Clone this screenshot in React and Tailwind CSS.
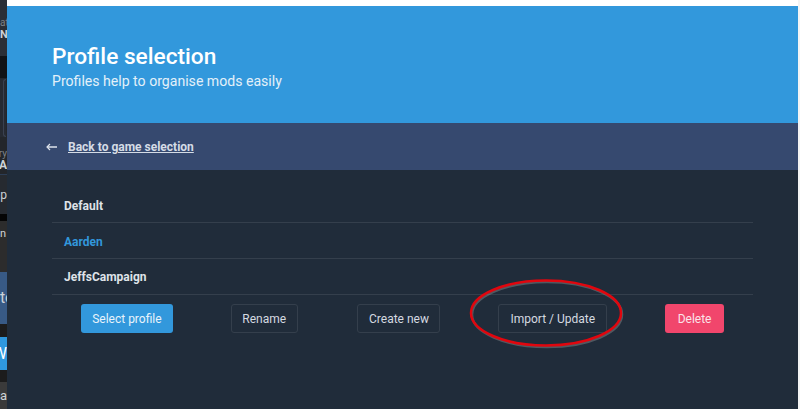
import React from 'react';

const font = { fontFamily: 'Roboto, "Noto Sans", sans-serif' };

// sliver of the window behind, only a few px of it show
const Sliver = () => {
  return (
    <div className="w-[7px] shrink-0 h-full flex flex-col overflow-hidden bg-[#23262b] text-[11px] leading-none whitespace-nowrap text-[#ccd2d8]">
      <div className="h-[56px] shrink-0 flex flex-col justify-end items-start pb-[15px] bg-[#2b2f36]">
        <span className="text-[#7d8288] text-[10px] leading-[11px]">at</span>
        <span className="font-bold leading-[13px]">N</span>
      </div>
      <div className="h-[22px] shrink-0 bg-[#111316]"></div>
      <div className="h-[60px] shrink-0 bg-[#262a32] border-r border-t border-b border-[#23262b]">
        <div className="h-full ml-[3px] rounded-l-[3px] border-l border-t border-b border-[#3a4150]"></div>
      </div>
      <div className="h-[37px] shrink-0 flex flex-col justify-end items-end pb-[2px] border-b border-[#2c3d55] bg-[#23262b]">
        <span className="text-[#7d8288] text-[10px] leading-[11px]">ry</span>
        <span className="font-bold text-[12px] leading-[13px]">A</span>
      </div>
      <div className="h-[39px] shrink-0 flex items-center justify-end text-[12px] bg-[#262a30]">ap</div>
      <div className="h-[7px] shrink-0 bg-[#050505]"></div>
      <div className="h-[51px] shrink-0 flex items-start justify-start pt-[7px] bg-[#2c2c2c]">n</div>
      <div className="h-[52px] shrink-0 flex items-center justify-start text-[16px] bg-[#385a85]">to</div>
      <div className="h-[13px] shrink-0 bg-[#1c1c1c]"></div>
      <div className="h-[33px] shrink-0 flex items-center justify-end text-[16px] text-white bg-[#2f98de]">W</div>
      <div className="h-[12px] shrink-0 bg-[#1c1c1c]"></div>
      <div className="flex-1 flex items-center justify-end text-[13px] bg-[#3a3a3a]">Pa</div>
    </div>
  );
};

const Btn = ({ children, className }) => {
  return (
    <button className={`h-[29px] rounded-[3px] text-[12px] ${className}`}>{children}</button>
  );
};

const App = () => {
  return (
    <div className="relative w-[800px] h-[409px] overflow-hidden flex bg-white" style={font}>
      <Sliver />
      <div className="w-[791px] shrink-0 flex flex-col pt-[6px]">
        {/* Header */}
        <div className="h-[117px] shrink-0 bg-[#3298dc] pl-[45px] pt-[36px] text-white">
          <h1 className="text-[22.7px] leading-[29px] font-medium">Profile selection</h1>
          <p className="text-[14.1px] leading-[20px] text-[#e3f0f9]">Profiles help to organise mods easily</p>
        </div>

        {/* Back bar */}
        <div className="h-[47px] shrink-0 bg-[#36496f] flex items-center pl-[39px] pt-[1px] text-[#d5dce6]">
          <svg className="mr-[11px]" width="11" height="8" viewBox="0 0 11 8" fill="none">
            <path d="M11 4H1.5" stroke="#dfe4ec" strokeWidth="1.5" />
            <path d="M4 1 1 4l3 3" stroke="#dfe4ec" strokeWidth="1.2" />
          </svg>
          <a className="text-[12px] font-bold underline">Back to game selection</a>
        </div>

        {/* Profile list */}
        <div className="flex-1 bg-[#202c3a] px-[45px] pt-[18px]">
          <div className="h-[35px] border-b border-[#343f4c] flex items-center pl-[12px] pt-[2px] text-[12px] font-bold text-[#dfe3e8]">Default</div>
          <div className="h-[36px] border-b border-[#343f4c] flex items-center pl-[12px] pt-[2px] text-[12px] font-bold text-[#3298dc]">Aarden</div>
          <div className="h-[36px] border-b border-[#343f4c] flex items-center pl-[12px] text-[12px] font-bold text-[#dfe3e8]">JeffsCampaign</div>

          <div className="flex items-center justify-around mt-[9px]">
            <Btn className="w-[92px] bg-[#3298dc] text-[#e8f3fb]">Select profile</Btn>
            <Btn className="w-[67px] border border-[#343f4c] text-[#d5dae0]">Rename</Btn>
            <Btn className="w-[83px] ml-[2px] border border-[#343f4c] text-[#d5dae0]">Create new</Btn>
            <Btn className="w-[109px] border border-[#343f4c] text-[#d5dae0]">Import / Update</Btn>
            <Btn className="w-[59px] bg-[#f1466c] text-[#fbe3e8]">Delete</Btn>
          </div>
        </div>
      </div>
      <div className="flex-1 bg-[#f4f4f4]"></div>

      {/* Red ring drawn over the button */}
      <svg className="absolute left-[465px] top-[275px] pointer-events-none" width="165" height="80" viewBox="0 0 165 80" fill="none">
        <ellipse cx="81" cy="38" rx="75" ry="32.5" stroke="#9a9a9a" strokeOpacity="0.4" strokeWidth="2.5" transform="translate(1 1.5)" />
        <ellipse cx="81" cy="38" rx="75" ry="32.5" stroke="#e0060e" strokeWidth="2.5" />
      </svg>
    </div>
  );
};

export default App;
